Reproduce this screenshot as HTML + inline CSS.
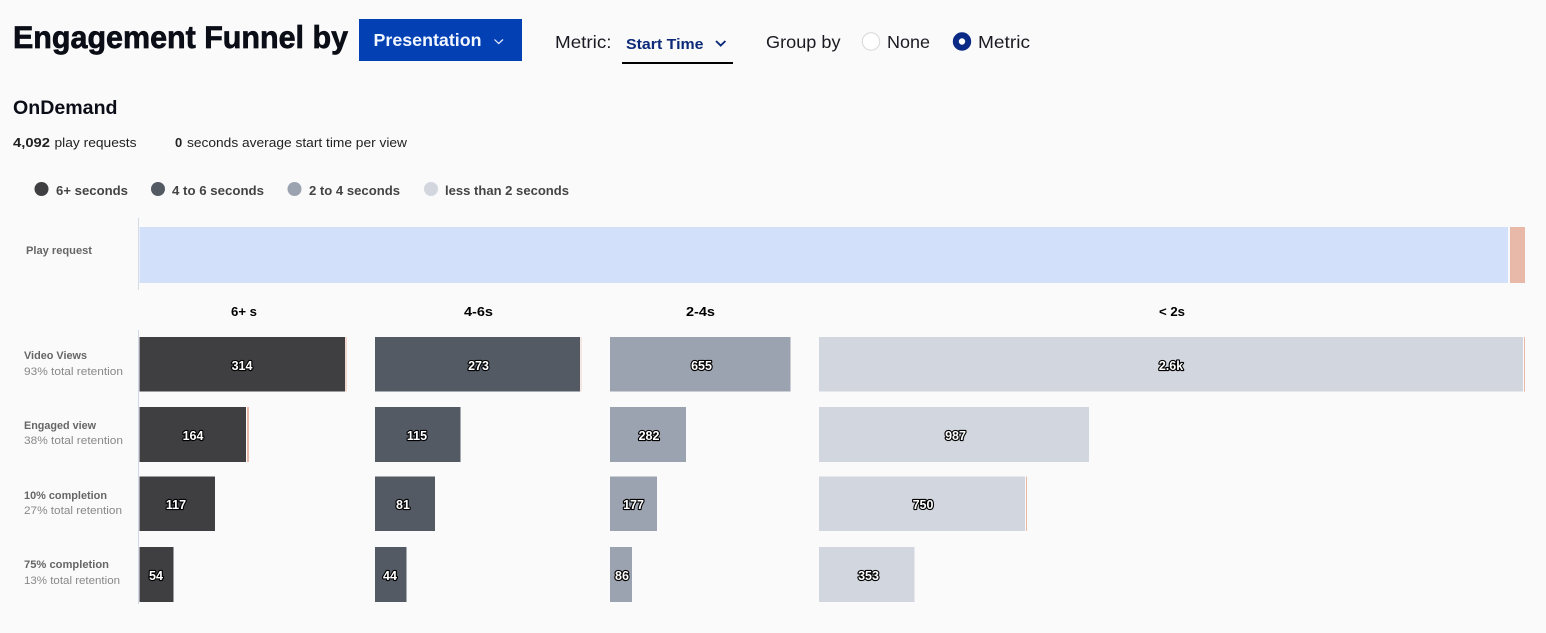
<!DOCTYPE html>
<html lang="en">
<head>
<meta charset="utf-8">
<title>Engagement Funnel</title>
<style>
html,body{margin:0;padding:0;background:#fafafa;width:1546px;height:633px;overflow:hidden}
svg{display:block}
text{font-family:"Liberation Sans",Arial,sans-serif;}
.b{font-weight:700}
.n{font-size:12.5px;font-weight:700;fill:#fff;stroke:#000;stroke-width:2.3px;paint-order:stroke;text-anchor:middle;stroke-linejoin:round}
.lb{font-size:11px;font-weight:700;fill:#666}
.ls{font-size:11px;fill:#888}
.h{font-size:13px;font-weight:700;fill:#000}
.lg{font-size:13px;font-weight:700;fill:#444}
.st{font-size:13px;fill:#222}
.ctl{font-size:17.5px;fill:#1a1a22}
</style>
</head>
<body>
<svg width="1546" height="633" viewBox="0 0 1546 633" xmlns="http://www.w3.org/2000/svg">
<rect width="1546" height="633" fill="#fafafa"/>

<text x="13" y="48" class="b" font-size="31.500" fill="#0b0d17" stroke="#0b0d17" stroke-width="0.7" textLength="335" lengthAdjust="spacingAndGlyphs">Engagement Funnel by</text>
<rect x="359" y="19" width="163" height="42" fill="#0340b4"/>
<text x="373.5" y="46" class="b" font-size="17.5" fill="#f2f6ff" textLength="108" lengthAdjust="spacingAndGlyphs">Presentation</text>
<path d="M494.5 39.5 L498.7 43.500 L503 39.500" fill="none" stroke="#e8eeff" stroke-width="1.2"/>

<text x="555" y="48" class="ctl" textLength="56.5" lengthAdjust="spacingAndGlyphs">Metric:</text>
<text x="626" y="49" class="b" font-size="15" fill="#0c2a78" textLength="77.5" lengthAdjust="spacingAndGlyphs">Start Time</text>
<path d="M716 41 L720.7 45.6 L725.4 41" fill="none" stroke="#0c2a78" stroke-width="1.9"/>
<rect x="622" y="62" width="111" height="2" fill="#000"/>
<text x="766" y="48" class="ctl" textLength="74.5" lengthAdjust="spacingAndGlyphs">Group by</text>
<circle cx="871" cy="41.5" r="8.7" fill="#fff" stroke="#d8d8d8" stroke-width="1"/>
<text x="887" y="48" class="ctl" textLength="43" lengthAdjust="spacingAndGlyphs">None</text>
<circle cx="962" cy="41.5" r="6.2" fill="#fff" stroke="#0a2a85" stroke-width="6"/>
<text x="978" y="48" class="ctl" textLength="52" lengthAdjust="spacingAndGlyphs">Metric</text>

<text x="13" y="114" class="b" font-size="19.5" fill="#0b0d17" textLength="104.5" lengthAdjust="spacingAndGlyphs">OnDemand</text>
<text x="13" y="147" class="b st" textLength="37" lengthAdjust="spacingAndGlyphs" style="font-weight:700">4,092</text>
<text x="54.5" y="147" class="st" textLength="82" lengthAdjust="spacingAndGlyphs">play requests</text>
<text x="175" y="147" class="st" style="font-weight:700">0</text>
<text x="187" y="147" class="st" textLength="220" lengthAdjust="spacingAndGlyphs">seconds average start time per view</text>

<circle cx="41.5" cy="189" r="7" fill="#3f3f42"/>
<text x="56" y="195" class="lg" textLength="72" lengthAdjust="spacingAndGlyphs">6+ seconds</text>
<circle cx="158" cy="189" r="7" fill="#535a64"/>
<text x="172" y="195" class="lg" textLength="92" lengthAdjust="spacingAndGlyphs">4 to 6 seconds</text>
<circle cx="294.500" cy="189" r="7" fill="#9ca3b0"/>
<text x="309" y="195" class="lg" textLength="91" lengthAdjust="spacingAndGlyphs">2 to 4 seconds</text>
<circle cx="431" cy="189" r="7" fill="#d2d6de"/>
<text x="445" y="195" class="lg" textLength="124" lengthAdjust="spacingAndGlyphs">less than 2 seconds</text>

<rect x="138" y="218" width="1" height="72" fill="#d5dbe6"/>
<rect x="138" y="330" width="1" height="274" fill="#d0d8e6"/>

<rect x="139.500" y="227" width="1368.500" height="56" fill="#d2e1f9"/>
<rect x="1510" y="227" width="15" height="56" fill="#e8b8a8"/>

<text x="26" y="254" class="lb" textLength="66" lengthAdjust="spacingAndGlyphs">Play request</text>
<text x="24" y="359" class="lb" textLength="63" lengthAdjust="spacingAndGlyphs">Video Views</text>
<text x="24" y="375" class="ls" textLength="99" lengthAdjust="spacingAndGlyphs">93% total retention</text>
<text x="24" y="429" class="lb" textLength="72" lengthAdjust="spacingAndGlyphs">Engaged view</text>
<text x="24" y="444" class="ls" textLength="99" lengthAdjust="spacingAndGlyphs">38% total retention</text>
<text x="24" y="499" class="lb" textLength="83" lengthAdjust="spacingAndGlyphs">10% completion</text>
<text x="24" y="514" class="ls" textLength="98" lengthAdjust="spacingAndGlyphs">27% total retention</text>
<text x="24" y="568" class="lb" textLength="85" lengthAdjust="spacingAndGlyphs">75% completion</text>
<text x="24" y="584" class="ls" textLength="96" lengthAdjust="spacingAndGlyphs">13% total retention</text>

<text x="231" y="316" class="h" textLength="26" lengthAdjust="spacingAndGlyphs">6+ s</text>
<text x="464" y="316" class="h" textLength="29" lengthAdjust="spacingAndGlyphs">4-6s</text>
<text x="686" y="316" class="h" textLength="29" lengthAdjust="spacingAndGlyphs">2-4s</text>
<text x="1159" y="316" class="h" textLength="26" lengthAdjust="spacingAndGlyphs">&lt; 2s</text>

<g fill="#3f3f42">
<rect x="139.500" y="337" width="205.500" height="54.500"/>
<rect x="139.500" y="407" width="106.500" height="55"/>
<rect x="139.500" y="476.500" width="75.500" height="54.500"/>
<rect x="139.500" y="547" width="34" height="55"/>
</g>
<g fill="#535a64">
<rect x="375" y="337" width="205" height="54.500"/>
<rect x="375" y="407" width="85.500" height="55"/>
<rect x="375" y="476.500" width="60" height="54.500"/>
<rect x="375" y="547" width="31.500" height="55"/>
</g>
<g fill="#9ca3b0">
<rect x="610" y="337" width="180.500" height="54.500"/>
<rect x="610" y="407" width="76" height="55"/>
<rect x="610" y="476.500" width="47" height="54.500"/>
<rect x="610" y="547" width="22" height="55"/>
</g>
<g fill="#d2d6de">
<rect x="819" y="337" width="704" height="54.500"/>
<rect x="819" y="407" width="270" height="55"/>
<rect x="819" y="476.500" width="206" height="54.500"/>
<rect x="819" y="547" width="95.500" height="55"/>
</g>
<g fill="#e8b8a8">
<rect x="345.500" y="337" width="1" height="54.500"/>
<rect x="580.500" y="337" width="1" height="54.500" opacity=".6"/>
<rect x="1524" y="337" width="1" height="54.500"/>
<rect x="247" y="407" width="2" height="55"/>
<rect x="1026" y="476.500" width="1" height="54.500"/>
</g>

<text x="242" y="370" class="n">314</text>
<text x="478.500" y="370" class="n">273</text>
<text x="701.500" y="370" class="n">655</text>
<text x="1171" y="370" class="n">2.6k</text>
<text x="193" y="440" class="n">164</text>
<text x="417" y="440" class="n">115</text>
<text x="649" y="440" class="n">282</text>
<text x="955.500" y="440" class="n">987</text>
<text x="176" y="509" class="n">117</text>
<text x="403" y="509" class="n">81</text>
<text x="633.500" y="509" class="n">177</text>
<text x="923" y="509" class="n">750</text>
<text x="156" y="580" class="n">54</text>
<text x="390" y="580" class="n">44</text>
<text x="622" y="580" class="n">86</text>
<text x="868.500" y="580" class="n">353</text>
</svg>
</body>
</html>
